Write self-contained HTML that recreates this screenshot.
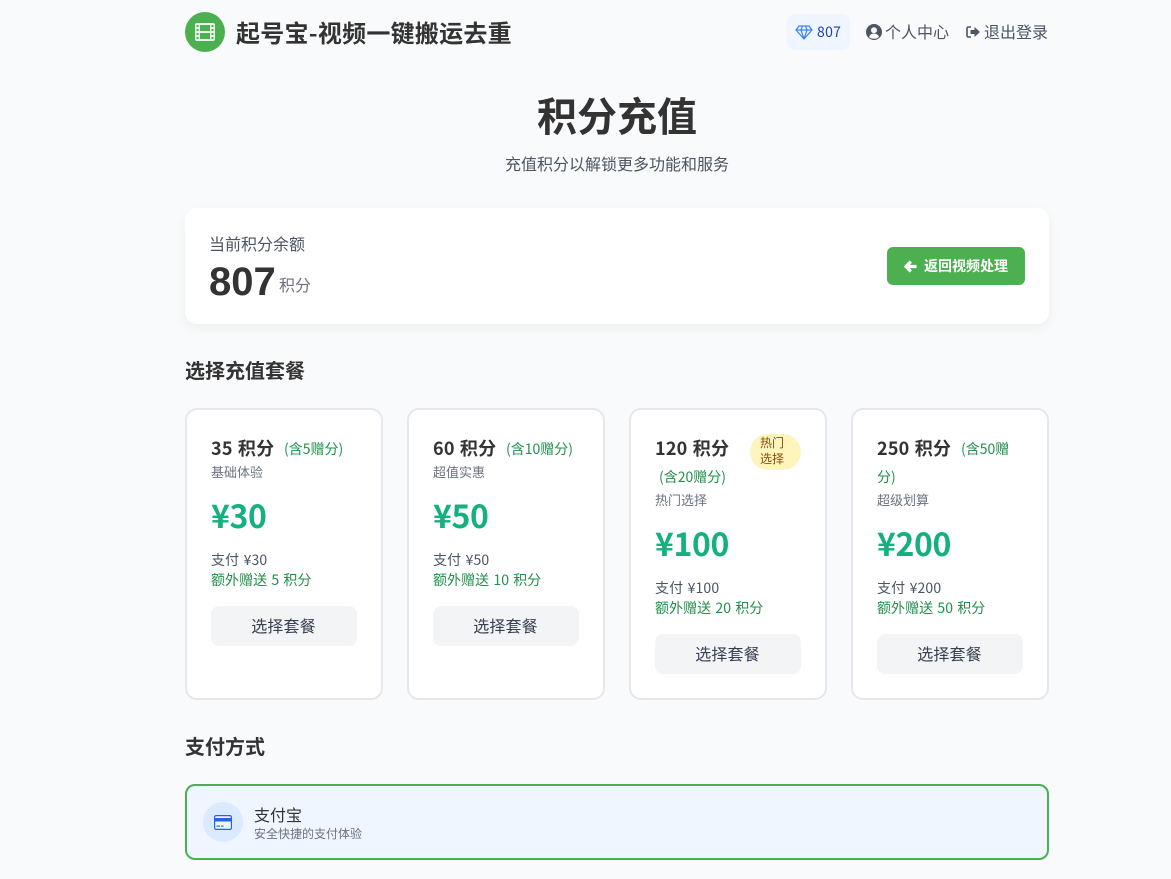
<!DOCTYPE html>
<html lang="zh-CN">
<head>
<meta charset="utf-8">
<title>积分充值</title>
<style>
html,body{margin:0;padding:0}
body{width:1171px;height:879px;overflow:hidden;position:relative;background:#f9fafb;font-family:"Noto Sans CJK SC","Liberation Sans",sans-serif;color:#333}
.a{position:absolute;white-space:nowrap}
.card{position:absolute;top:408px;width:198px;height:292px;box-sizing:border-box;background:#fff;border:2px solid #e5e7eb;border-radius:12px}
.pts{font-size:18px;font-weight:700;color:#333;line-height:26px;letter-spacing:.2px;word-spacing:1px;top:25px}
.bonus{font-size:14px;color:#228f4c;line-height:22px;font-weight:400}
.desc{font-size:13px;color:#6b7280;line-height:18px}
.price{font-size:32px;font-weight:700;color:#14b07e;line-height:40px;letter-spacing:-.4px}
.pay{font-size:14px;color:#4b5563;line-height:20px;letter-spacing:.15px;word-spacing:1px}
.gift{font-size:14px;color:#228f4c;line-height:20px;word-spacing:1px;letter-spacing:.05px}
.btn{position:absolute;width:146px;height:40px;left:24px;background:#f3f4f6;border-radius:8px;text-align:center;font-size:16px;line-height:38px;color:#374151;letter-spacing:.1px;text-indent:-1px}
</style>
</head>
<body>
<div class="a" style="left:185px;top:12px;width:40px;height:40px;border-radius:50%;background:#4caf50"></div>
<svg class="a" style="left:194px;top:22px" width="22" height="20" viewBox="0 0 22 20"><rect x="1" y="1" width="20" height="18" rx="2" fill="#e8f5e9"/><rect x="6" y="3" width="10" height="6" fill="#4caf50"/><rect x="6" y="11" width="10" height="6" fill="#4caf50"/><g fill="#4caf50"><rect x="2.500" y="3" width="2" height="2"/><rect x="2.500" y="7" width="2" height="2"/><rect x="2.500" y="11" width="2" height="2"/><rect x="2.500" y="15" width="2" height="2"/><rect x="17.500" y="3" width="2" height="2"/><rect x="17.500" y="7" width="2" height="2"/><rect x="17.500" y="11" width="2" height="2"/><rect x="17.500" y="15" width="2" height="2"/></g></svg>
<div class="a" style="left:236px;top:14px;font-size:24px;font-weight:700;line-height:36px;color:#333;letter-spacing:.25px">起号宝-视频一键搬运去重</div>

<div class="a" style="left:787px;top:14px;width:63px;height:36px;border-radius:8px;background:#eff6ff"></div>
<svg class="a" style="left:795px;top:25px" width="18" height="15" viewBox="0 0 18 15" fill="none" stroke="#3b82f6" stroke-width="1.200" stroke-linejoin="round"><path d="M4 1h10l3 4-8 9-8-9zM1 5h16M6 5l3 9 3-9M6 5l1.500-4M12 5l-1.500-4"/></svg>
<div class="a" style="left:817px;top:21px;font-size:14px;line-height:22px;color:#1e40af;letter-spacing:.3px">807</div>
<svg class="a" style="left:866px;top:24px" width="16" height="16" viewBox="0 0 16 16"><circle cx="8" cy="8" r="8" fill="#4b5563"/><circle cx="8" cy="6.200" r="3" fill="#f9fafb"/><path d="M3 13c1-2.600 2.800-3.400 5-3.400s4 .8 5 3.400c-1.300 1.200-3 1.800-5 1.800s-3.700-.6-5-1.800z" fill="#f9fafb"/></svg>
<div class="a" style="left:885px;top:19px;font-size:16px;line-height:24px;color:#4b5563">个人中心</div>
<svg class="a" style="left:966px;top:26px" width="14" height="12" viewBox="0 0 14 12"><path d="M5 1H2.500A1.500 1.500 0 0 0 1 2.500v7A1.500 1.500 0 0 0 2.500 11H5" fill="none" stroke="#4b5563" stroke-width="1.600"/><path d="M8.500 1L14 6l-5.500 5V8H4.500V4h4z" fill="#4b5563"/></svg>
<div class="a" style="left:984px;top:19px;font-size:16px;line-height:24px;color:#4b5563">退出登录</div>

<div class="a" style="left:185px;width:864px;top:86px;text-align:center;font-size:40px;font-weight:700;line-height:56px;color:#333">积分充值</div>
<div class="a" style="left:185px;width:864px;top:151px;text-align:center;font-size:16px;line-height:24px;color:#4b5563">充值积分以解锁更多功能和服务</div>

<div class="a" style="left:185px;top:208px;width:864px;height:116px;background:#fff;border-radius:12px;box-shadow:0 4px 12px rgba(0,0,0,.05)"></div>
<div class="a" style="left:209px;top:231px;font-size:16px;line-height:24px;color:#4b5563">当前积分余额</div>
<div class="a" style="left:209px;top:259px;font-family:'Liberation Sans',sans-serif;font-size:40px;font-weight:700;line-height:46px;color:#333">807</div>
<div class="a" style="left:279px;top:272px;font-size:16px;line-height:24px;color:#6b7280">积分</div>
<div class="a" style="left:887px;top:247px;width:138px;height:38px;border-radius:6px;background:#4caf50"></div>
<svg class="a" style="left:904px;top:260px" width="13" height="13" viewBox="0 0 13 13"><path d="M6.800 1.500L2 6.500l4.800 5M3 6.500H12.500" fill="none" stroke="#fff" stroke-width="3.200"/></svg>
<div class="a" style="left:924px;top:256px;font-size:14px;font-weight:700;line-height:20px;color:#fff">返回视频处理</div>

<div class="a" style="left:185px;top:355px;font-size:20px;font-weight:700;line-height:30px;color:#333">选择充值套餐</div>

<div class="card" style="left:185px">
<div class="a pts" style="left:24px">35 积分</div>
<div class="a bonus" style="left:97px;top:28px">(含5赠分)</div>
<div class="a desc" style="left:24px;top:53px">基础体验</div>
<div class="a price" style="left:24px;top:85px">¥30</div>
<div class="a pay" style="left:24px;top:140px">支付 ¥30</div>
<div class="a gift" style="left:24px;top:160px">额外赠送 5 积分</div>
<div class="btn" style="top:196px">选择套餐</div>
</div>

<div class="card" style="left:407px">
<div class="a pts" style="left:24px">60 积分</div>
<div class="a bonus" style="left:97px;top:28px">(含10赠分)</div>
<div class="a desc" style="left:24px;top:53px">超值实惠</div>
<div class="a price" style="left:24px;top:85px">¥50</div>
<div class="a pay" style="left:24px;top:140px">支付 ¥50</div>
<div class="a gift" style="left:24px;top:160px">额外赠送 10 积分</div>
<div class="btn" style="top:196px">选择套餐</div>
</div>

<div class="card" style="left:629px">
<div class="a pts" style="left:24px">120 积分</div>
<div class="a" style="left:119px;top:24px;width:51px;height:36px;border-radius:18px;background:#fef5bd"></div>
<div class="a" style="left:129px;top:25px;font-size:12px;line-height:16px;color:#854d0e">热门<br>选择</div>
<div class="a bonus" style="left:28px;top:56px">(含20赠分)</div>
<div class="a desc" style="left:24px;top:81px">热门选择</div>
<div class="a price" style="left:24px;top:113px">¥100</div>
<div class="a pay" style="left:24px;top:168px">支付 ¥100</div>
<div class="a gift" style="left:24px;top:188px">额外赠送 20 积分</div>
<div class="btn" style="top:224px">选择套餐</div>
</div>

<div class="card" style="left:851px">
<div class="a pts" style="left:24px">250 积分</div>
<div class="a bonus" style="left:108px;top:28px">(含50赠</div>
<div class="a bonus" style="left:24px;top:56px">分)</div>
<div class="a desc" style="left:24px;top:81px">超级划算</div>
<div class="a price" style="left:24px;top:113px">¥200</div>
<div class="a pay" style="left:24px;top:168px">支付 ¥200</div>
<div class="a gift" style="left:24px;top:188px">额外赠送 50 积分</div>
<div class="btn" style="top:224px">选择套餐</div>
</div>

<div class="a" style="left:185px;top:731px;font-size:20px;font-weight:700;line-height:30px;color:#333">支付方式</div>

<div class="a" style="left:185px;top:784px;width:864px;height:76px;box-sizing:border-box;background:#eff6ff;border:2px solid #4caf50;border-radius:10px"></div>
<div class="a" style="left:203px;top:802px;width:40px;height:40px;border-radius:50%;background:#dbeafe"></div>
<svg class="a" style="left:214px;top:815px" width="18" height="15" viewBox="0 0 18 15"><rect x=".6" y=".6" width="16.800" height="13.800" rx="1.500" fill="#eff6ff" stroke="#2563eb" stroke-width="1.200"/><rect x="1" y="3" width="16" height="3.500" fill="#2563eb"/><rect x="2.500" y="10.500" width="3.500" height="1.200" fill="#2563eb"/><rect x="7" y="10.500" width="2.500" height="1.200" fill="#2563eb"/></svg>
<div class="a" style="left:254px;top:803px;font-size:16px;line-height:22px;color:#333">支付宝</div>
<div class="a" style="left:254px;top:825px;font-size:12px;line-height:17px;color:#6b7280">安全快捷的支付体验</div>
</body>
</html>
